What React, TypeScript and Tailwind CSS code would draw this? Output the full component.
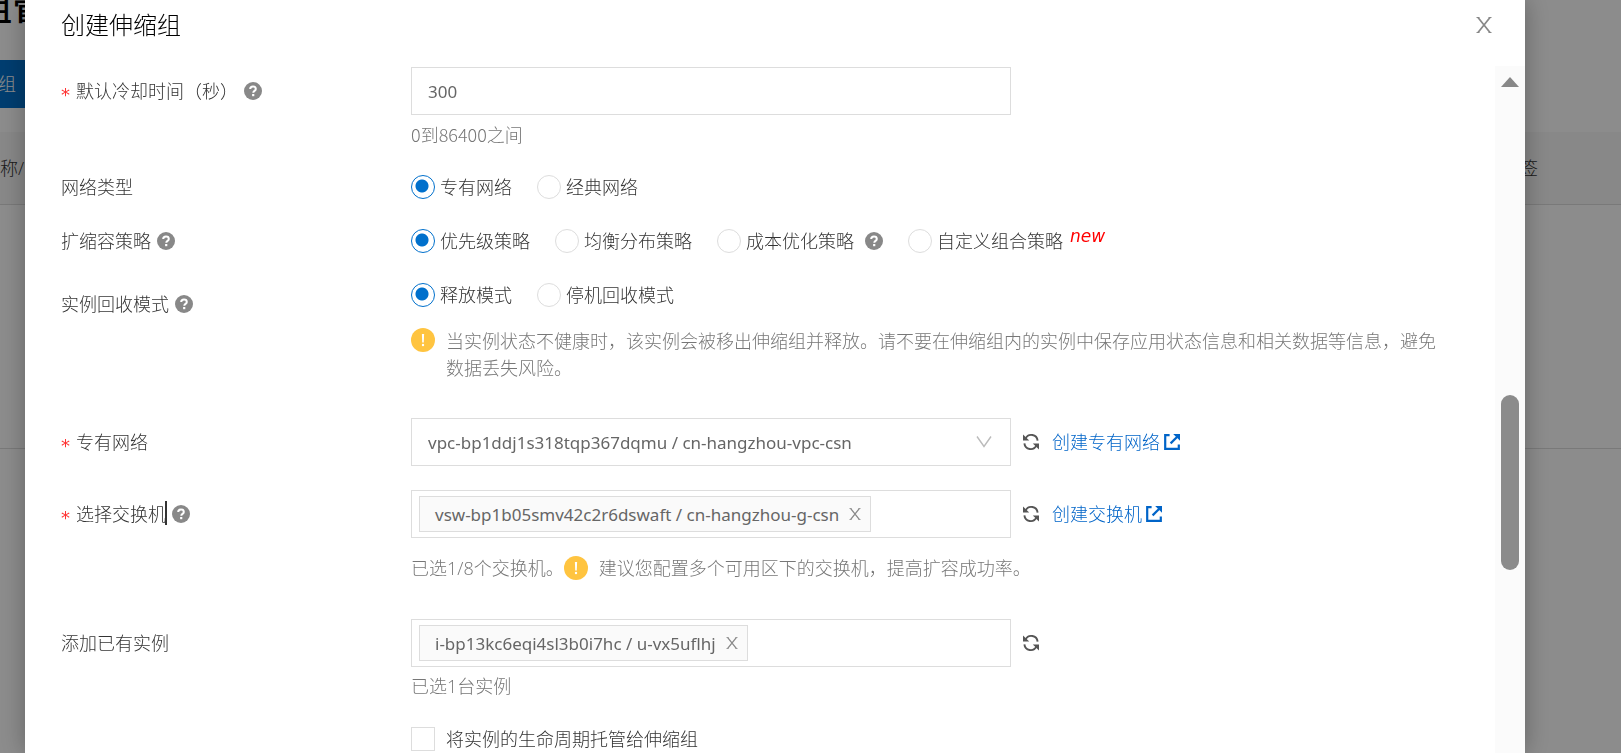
import React, { useState } from 'react';

interface IconProps {
  className?: string;
}

const HelpIcon: React.FC<IconProps> = ({ className = '' }) => (
  <svg viewBox="0 0 18 18" className={`w-[18px] h-[18px] flex-shrink-0 ${className}`} aria-hidden="true">
    <circle cx="9" cy="9" r="9" fill="#888888" />
    <path d="M6.2 7.1c0-1.6 1.2-2.5 2.8-2.5s2.8.9 2.8 2.4c0 1.9-2.5 1.9-2.5 3.7" fill="none" stroke="#fff" strokeWidth="2" />
    <rect x="8.1" y="12" width="2.2" height="2.2" fill="#fff" />
  </svg>
);

const WarningIcon: React.FC<IconProps> = ({ className = '' }) => (
  <svg viewBox="0 0 24 24" className={`w-6 h-6 flex-shrink-0 ${className}`} aria-hidden="true">
    <circle cx="12" cy="12" r="12" fill="#ffc440" />
    <path d="M10.9 6h2.2l-.3 8.6h-1.6z" fill="#fff" />
    <circle cx="12" cy="17" r="1.2" fill="#fff" />
  </svg>
);

const RefreshIcon: React.FC = () => (
  <svg viewBox="0 0 18 18" className="w-[18px] h-[18px]" aria-hidden="true">
    <path d="M3.6 5.6A6.3 6.3 0 0 1 15.6 7.6M14.4 12.4A6.3 6.3 0 0 1 2.4 10.4" fill="none" stroke="#555555" strokeWidth="1.9" />
    <path d="M1 1.6v6h6.2z" fill="#555555" />
    <path d="M17 16.4v-6h-6.2z" fill="#555555" />
  </svg>
);

const ExternalIcon: React.FC = () => (
  <svg viewBox="0 0 16 16" className="w-4 h-4" aria-hidden="true">
    <path d="M5.6 1.2H1.2v13.6h13.6v-4.4" fill="none" stroke="#0064c8" strokeWidth="2.2" />
    <path d="M9.2 0H16v6.8z" fill="#0064c8" />
    <path d="M6.6 9.4l6.4-6.4" fill="none" stroke="#0064c8" strokeWidth="2.2" />
  </svg>
);

const CrossIcon: React.FC<IconProps> = ({ className = '' }) => (
  <svg viewBox="0 0 16 16" className={className} aria-hidden="true">
    <path d="M2 .5l12 15M14 .5l-12 15" fill="none" stroke="currentColor" strokeWidth="1.7" />
    <path d="M.5.5h3M12.5.5h3M.5 15.5h3M12.5 15.5h3" fill="none" stroke="currentColor" strokeWidth="1" />
  </svg>
);

interface RowProps {
  label: string;
  htmlFor?: string;
  required?: boolean;
  help?: boolean;
  caret?: boolean;
  labelClass?: string;
  className?: string;
  children: React.ReactNode;
}

const Row: React.FC<RowProps> = ({ label, htmlFor, required, help, caret, labelClass = 'h-12', className = '', children }) => (
  <div className={`flex ${className}`}>
    <div className={`w-[350px] flex-shrink-0 flex items-center ${labelClass}`}>
      {required && <span className="w-[15px] pt-1.5 font-['DejaVu_Sans',sans-serif] font-normal text-[#ff3333]">*</span>}
      <label htmlFor={htmlFor} className="relative">
        {label}
        {caret && <span className="absolute -right-px top-0 w-0.5 h-6 bg-[#333333]" />}
      </label>
      {help && <HelpIcon className="ml-1.5" />}
    </div>
    <div className="flex-1 min-w-0">{children}</div>
  </div>
);

interface RadioProps {
  name: string;
  value: string;
  current: string;
  onChange: (value: string) => void;
}

const Radio: React.FC<RadioProps> = ({ name, value, current, onChange }) => (
  <label className="flex items-center gap-[5px]">
    <input
      type="radio"
      name={name}
      checked={current === value}
      onChange={() => onChange(value)}
      className="appearance-none w-6 h-6 rounded-full border border-[#dddddd] bg-white checked:border-[#0070cc] checked:bg-[radial-gradient(circle_at_10px_10px,#0070cc_6px,transparent_7px)]"
    />
    {value}
  </label>
);

interface TagBoxProps {
  id: string;
  items: string[];
  onRemove: (item: string) => void;
}

const TagBox: React.FC<TagBoxProps> = ({ id, items, onRemove }) => (
  <div className="w-[600px] h-12 border border-[#dddddd] flex items-center px-[7px]">
    {items.map((item) => (
      <span key={item} className="h-9 flex items-center gap-2.5 pl-[15px] pr-[9px] border border-[#dddddd] bg-[#fafafa] font-['Noto_Sans',sans-serif] text-[17px] font-normal text-[#666666] whitespace-nowrap">
        {item}
        <button type="button" aria-label={`移除 ${item}`} onClick={() => onRemove(item)} className="text-[#888888]">
          <CrossIcon className="w-3 h-3" />
        </button>
      </span>
    ))}
    <input id={id} type="text" className="flex-1 min-w-0 h-9 outline-none" />
  </div>
);

const RefreshButton: React.FC = () => (
  <button type="button" aria-label="刷新" className="ml-[11px]">
    <RefreshIcon />
  </button>
);

const CreateLink: React.FC<{ text: string }> = ({ text }) => (
  <a href="#" className="ml-3 flex items-center gap-1 text-[#0064c8]">
    {text}
    <ExternalIcon />
  </a>
);

// List page that stays under the mask
const ListPage: React.FC = () => (
  <div className="bg-white text-[#333333]">
    <h1 className="h-[60px] -ml-[22px] text-[34px] leading-[14px] font-medium text-black">组管</h1>
    <button type="button" className="block h-12 w-40 -ml-[74px] pl-0 bg-[#0070cc] text-white text-left">
      创建伸缩组
    </button>
    <div className="mt-6 h-[73px] flex items-center justify-between bg-[#f7f7f7] border-b border-[#dddddd]">
      <span>称/ID</span>
      <span className="w-[119px]">标签</span>
    </div>
    <div className="h-[244px] border-b border-[#dddddd]" />
  </div>
);

const App: React.FC = () => {
  const [cooldown, setCooldown] = useState('300');
  const [network, setNetwork] = useState('专有网络');
  const [policy, setPolicy] = useState('优先级策略');
  const [recycle, setRecycle] = useState('释放模式');
  const [switches, setSwitches] = useState(['vsw-bp1b05smv42c2r6dswaft / cn-hangzhou-g-csn']);
  const [instances, setInstances] = useState(['i-bp13kc6eqi4sl3b0i7hc / u-vx5uflhj']);

  return (
    <div className="h-screen overflow-hidden font-['Open_Sans','Noto_Sans_CJK_SC',sans-serif] text-[18px] leading-[27px] font-light">
      <ListPage />

      <div className="fixed inset-0 bg-black/45 pl-[25px] pr-24 overflow-hidden">
        <div role="dialog" aria-label="创建伸缩组" className="h-full bg-white flex flex-col text-[#333333] shadow-[0_0_24px_rgba(0,0,0,0.3)]">
          <div className="h-[66px] flex-shrink-0 flex items-start justify-between pl-9 pr-[33px] pt-[7px]">
            <h2 className="text-[24px] leading-[36px] text-black font-light">创建伸缩组</h2>
            <button type="button" aria-label="关闭" className="mt-2.5 text-[#888888]">
              <CrossIcon className="w-4 h-4" />
            </button>
          </div>

          <div className="flex-1 min-h-0 flex">
            <form className="flex-1 min-w-0 overflow-hidden pl-9 pr-14 pt-px flex flex-col gap-6">
              <Row label="默认冷却时间（秒）" htmlFor="cooldown" required help>
                <input
                  id="cooldown"
                  type="text"
                  value={cooldown}
                  onChange={(e) => setCooldown(e.target.value)}
                  className="block w-[600px] h-12 border border-[#dddddd] px-4 font-['Noto_Sans',sans-serif] text-[17px] font-normal text-[#666666] outline-none"
                />
                <p className="mt-1.5 font-['Noto_Sans_CJK_SC',sans-serif] text-[#777777]">0到86400之间</p>
              </Row>

              <Row label="网络类型" labelClass="h-[30px]">
                <div className="h-[30px] flex items-center gap-[25px]">
                  <Radio name="network" value="专有网络" current={network} onChange={setNetwork} />
                  <Radio name="network" value="经典网络" current={network} onChange={setNetwork} />
                </div>
              </Row>

              <Row label="扩缩容策略" help labelClass="h-[30px]">
                <div className="h-[30px] flex items-center gap-[25px]">
                  <Radio name="policy" value="优先级策略" current={policy} onChange={setPolicy} />
                  <Radio name="policy" value="均衡分布策略" current={policy} onChange={setPolicy} />
                  <div className="flex items-center gap-[11px]">
                    <Radio name="policy" value="成本优化策略" current={policy} onChange={setPolicy} />
                    <HelpIcon />
                  </div>
                  <div className="flex items-center gap-[7px]">
                    <Radio name="policy" value="自定义组合策略" current={policy} onChange={setPolicy} />
                    <em className="pb-2.5 font-['DejaVu_Sans',sans-serif] text-[17px] font-normal text-[#ff0000]">new</em>
                  </div>
                </div>
              </Row>

              <Row label="实例回收模式" help labelClass="h-12" className="pb-3">
                <div className="h-[30px] flex items-center gap-[25px]">
                  <Radio name="recycle" value="释放模式" current={recycle} onChange={setRecycle} />
                  <Radio name="recycle" value="停机回收模式" current={recycle} onChange={setRecycle} />
                </div>
                <div className="mt-[18px] flex gap-[11px] text-[#777777]">
                  <WarningIcon />
                  <p>当实例状态不健康时，该实例会被移出伸缩组并释放。请不要在伸缩组内的实例中保存应用状态信息和相关数据等信息，避免数据丢失风险。</p>
                </div>
              </Row>

              <Row label="专有网络" htmlFor="vpc" required>
                <div className="flex items-center">
                  <div className="relative w-[600px]">
                    <select id="vpc" className="appearance-none block w-full h-12 border border-[#dddddd] bg-white px-4 font-['Noto_Sans',sans-serif] text-[17px] font-normal text-[#666666] outline-none">
                      <option>vpc-bp1ddj1s318tqp367dqmu / cn-hangzhou-vpc-csn</option>
                    </select>
                    <svg viewBox="0 0 16 12" className="absolute right-[19px] top-[18px] w-4 h-3 pointer-events-none" aria-hidden="true">
                      <path d="M1 .5l7 10 7-10" fill="none" stroke="#bbbbbb" strokeWidth="1.4" />
                    </svg>
                  </div>
                  <RefreshButton />
                  <CreateLink text="创建专有网络" />
                </div>
              </Row>

              <Row label="选择交换机" htmlFor="vswitch" required help caret className="pb-3">
                <div className="flex items-center">
                  <TagBox id="vswitch" items={switches} onRemove={(item) => setSwitches(switches.filter((s) => s !== item))} />
                  <RefreshButton />
                  <CreateLink text="创建交换机" />
                </div>
                <div className="mt-[15px] h-[30px] flex items-center text-[#777777]">
                  已选{switches.length}/8个交换机。
                  <WarningIcon className="mr-[11px]" />
                  建议您配置多个可用区下的交换机，提高扩容成功率。
                </div>
              </Row>

              <Row label="添加已有实例" htmlFor="instances">
                <div className="flex items-center">
                  <TagBox id="instances" items={instances} onRemove={(item) => setInstances(instances.filter((i) => i !== item))} />
                  <RefreshButton />
                </div>
                <p className="mt-1.5 text-[#777777]">已选{instances.length}台实例</p>
              </Row>

              <Row label="">
                <label className="h-[30px] flex items-center gap-[11px]">
                  <input type="checkbox" className="appearance-none w-6 h-6 border border-[#dddddd] bg-white checked:bg-[#0070cc]" />
                  将实例的生命周期托管给伸缩组
                </label>
              </Row>
            </form>

            <div className="w-[30px] flex-shrink-0 bg-[#fbfbfb] flex flex-col items-center">
              <svg viewBox="0 0 18 10" className="mt-[11px] w-[18px] h-2.5" aria-hidden="true">
                <path d="M9 0l9 10H0z" fill="#888888" />
              </svg>
              <div className="mt-[308px] w-[18px] h-[175px] rounded-full bg-[#8b8b8b]" />
            </div>
          </div>
        </div>
      </div>
    </div>
  );
};

export default App;
